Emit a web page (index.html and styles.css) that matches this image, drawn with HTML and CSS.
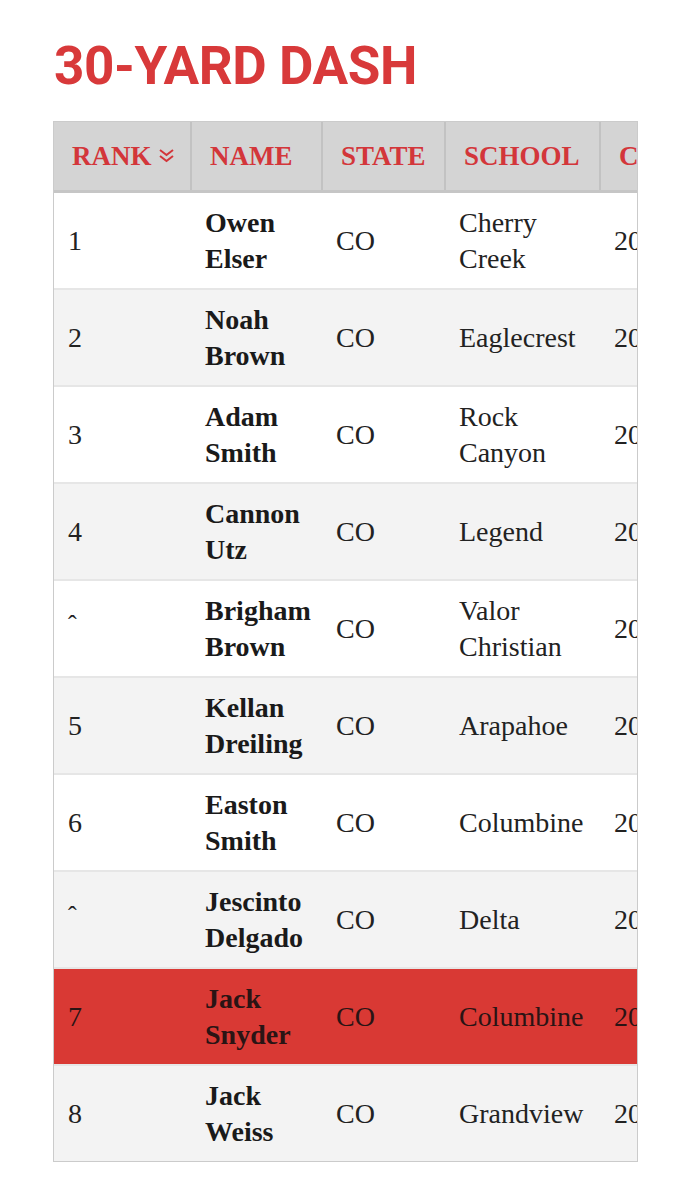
FILE: index.html
```html
<!DOCTYPE html>
<html lang="en">
<head>
<meta charset="utf-8">
<title>30-Yard Dash</title>
<link rel="stylesheet" href="styles.css">
</head>
<body>
<main class="page">
  <h1 class="title">30-YARD DASH</h1>
  <div class="table-wrap">
    <table class="results">
      <colgroup>
        <col class="c-rank"><col class="c-name"><col class="c-state"><col class="c-school"><col class="c-class">
      </colgroup>
      <thead>
        <tr>
          <th>RANK <svg class="sort" width="17" height="15" viewBox="0 0 17 15"><path d="M2 2 L8.5 7 L15 2 M2 8 L8.5 13 L15 8" fill="none" stroke="currentColor" stroke-width="2"/></svg></th>
          <th>NAME</th>
          <th>STATE</th>
          <th>SCHOOL</th>
          <th>CLASS</th>
        </tr>
      </thead>
      <tbody>
        <tr><td>1</td><td class="name">Owen<br>Elser</td><td>CO</td><td>Cherry<br>Creek</td><td>2022</td></tr>
        <tr><td>2</td><td class="name">Noah<br>Brown</td><td>CO</td><td>Eaglecrest</td><td>2022</td></tr>
        <tr><td>3</td><td class="name">Adam<br>Smith</td><td>CO</td><td>Rock<br>Canyon</td><td>2022</td></tr>
        <tr><td>4</td><td class="name">Cannon<br>Utz</td><td>CO</td><td>Legend</td><td>2022</td></tr>
        <tr><td><span class="tie">ˆ</span></td><td class="name">Brigham<br>Brown</td><td>CO</td><td>Valor<br>Christian</td><td>2022</td></tr>
        <tr><td>5</td><td class="name">Kellan<br>Dreiling</td><td>CO</td><td>Arapahoe</td><td>2022</td></tr>
        <tr><td>6</td><td class="name">Easton<br>Smith</td><td>CO</td><td>Columbine</td><td>2022</td></tr>
        <tr><td><span class="tie">ˆ</span></td><td class="name">Jescinto<br>Delgado</td><td>CO</td><td>Delta</td><td>2022</td></tr>
        <tr class="highlight"><td>7</td><td class="name">Jack<br>Snyder</td><td>CO</td><td>Columbine</td><td>2022</td></tr>
        <tr><td>8</td><td class="name">Jack<br>Weiss</td><td>CO</td><td>Grandview</td><td>2022</td></tr>
      </tbody>
    </table>
  </div>
</main>
</body>
</html>
```
FILE: styles.css
```css
html, body {
  margin: 0;
  padding: 0;
  background: #ffffff;
}

.page {
  padding: 34px 54px 40px 53px;
}

.title {
  margin: 0 0 23px 1px;
  font-family: Roboto, "Liberation Sans", sans-serif;
  font-weight: 700;
  font-size: 53px;
  line-height: 64px;
  letter-spacing: -0.4px;
  color: #d8393a;
}

.table-wrap {
  width: 583px;
  overflow: hidden;
  border: 1px solid #cbcbcb;
}

.results {
  border-collapse: collapse;
  table-layout: fixed;
  width: 720px;
  font-family: "Liberation Serif", "Times New Roman", serif;
  color: #222222;
}

.c-rank { width: 137px; }
.c-name { width: 131px; }
.c-state { width: 123px; }
.c-school { width: 155px; }
.c-class { width: 174px; }

.results thead th {
  background: #d4d4d4;
  color: #d3363a;
  font-size: 27px;
  font-weight: 700;
  text-align: left;
  white-space: nowrap;
  height: 68px;
  padding: 0 0 0 18px;
  border-right: 2px solid #c2c2c2;
  border-bottom: 3px solid #c6c6c6;
  vertical-align: middle;
}

.sort {
  vertical-align: 2px;
  margin-left: 0;
}

.results tbody td {
  font-size: 28px;
  line-height: 36px;
  height: 95px;
  padding: 0 8px 0 14px;
  vertical-align: middle;
  border-bottom: 2px solid #e6e6e6;
  white-space: nowrap;
}

.results tbody tr:nth-child(even) td {
  background: #f3f3f3;
}

.results tbody tr:last-child td {
  border-bottom: none;
}

.results tbody td.name {
  font-weight: 700;
  color: #1a1a1a;
}

.results tbody tr.highlight td {
  background: #d93934;
  color: #2a1414;
}

.tie {
  font-size: 26px;
  position: relative;
  top: -4px;
}
```
